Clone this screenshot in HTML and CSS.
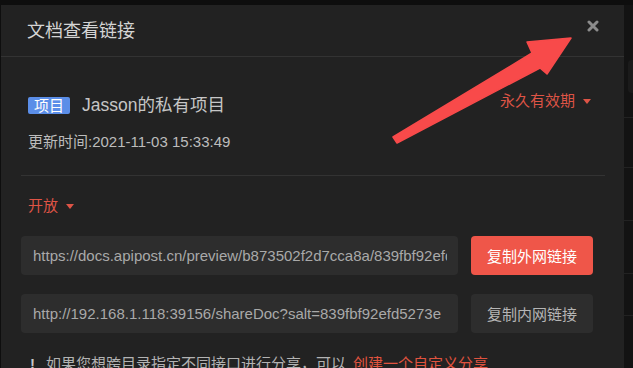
FILE: index.html
```html
<!DOCTYPE html>
<html lang="zh-CN">
<head>
<meta charset="utf-8">
<title>文档查看链接</title>
<link rel="stylesheet" href="styles.css">
</head>
<body>
<div class="screen">
  <div class="dialog">
    <div class="header">
      <div class="title">文档查看链接</div>
      <svg class="close" width="12" height="12" viewBox="0 0 12 12" aria-label="关闭">
        <path d="M2 2 L10 10 M10 2 L2 10" stroke="#8c8c8c" stroke-width="3" stroke-linecap="round"/>
      </svg>
    </div>
    <div class="body">
      <div class="info">
        <div class="info-row">
          <div class="project">
            <span class="tag">项目</span>
            <span class="project-name">Jasson的私有项目</span>
          </div>
          <div class="expire">永久有效期<span class="caret"></span></div>
        </div>
        <div class="updated">更新时间:2021-11-03 15:33:49</div>
      </div>
      <div class="access">开放<span class="caret"></span></div>
      <div class="link-row">
        <div class="field"><span class="field-text">https://docs.apipost.cn/preview/b873502f2d7cca8a/839fbf92efd5273e</span></div>
        <div class="btn btn-primary">复制外网链接</div>
      </div>
      <div class="link-row">
        <div class="field"><span class="field-text">http://192.168.1.118:39156/shareDoc?salt=839fbf92efd5273e</span></div>
        <div class="btn btn-secondary">复制内网链接</div>
      </div>
      <div class="hint"><span class="bang">!</span><span class="hint-text">如果您想跨目录指定不同接口进行分享，可以</span><span class="hint-link">创建一个自定义分享</span></div>
    </div>
  </div>
  <div class="side">
    <div class="side-box"></div>
    <div class="side-line l1"></div>
    <div class="side-line l2"></div>
    <div class="side-line l3"></div>
    <div class="side-line l4"></div>
    <div class="side-line l5"></div>
  </div>
  <svg class="arrow" width="633" height="368" viewBox="0 0 633 368">
    <polygon points="393,137 397,143 540,68 547,74 571,38 527,42 532,53" fill="#f84a4a" stroke="#f84a4a" stroke-width="1.5" stroke-linejoin="round"/>
  </svg>
</div>
</body>
</html>
```
FILE: styles.css
```css
html, body {
  margin: 0;
  padding: 0;
  background: #121212;
}
body {
  font-family: "Liberation Sans", "Noto Sans CJK SC", Arial, sans-serif;
  font-size: 15px;
}
.screen {
  position: relative;
  width: 633px;
  height: 368px;
  overflow: hidden;
  display: flex;
  padding-top: 5px;
  box-sizing: border-box;
  background: #0e0e0e;
}
.dialog {
  margin-left: 1px;
  width: 623px;
  height: 363px;
  background: #222222;
  overflow: hidden;
  flex: none;
}
.header {
  height: 51px;
  border-bottom: 1px solid #333333;
  display: flex;
  align-items: center;
  justify-content: space-between;
  padding: 0 25px 0 26px;
}
.title {
  font-size: 18px;
  color: #d4d4d4;
  line-height: 24px;
}
.close {
  align-self: flex-start;
  margin-top: 15px;
}
.body {
  padding: 0 19px 0 20px;
}
.info {
  padding: 38px 14px 23px 7px;
  border-bottom: 1px solid #333333;
}
.info-row {
  display: flex;
  justify-content: space-between;
  align-items: flex-start;
  height: 21px;
}
.project {
  display: flex;
  align-items: center;
  height: 21px;
}
.tag {
  display: inline-block;
  background: #5b8ee8;
  color: #ffffff;
  font-size: 15px;
  line-height: 17px;
  padding: 0 6px;
  border-radius: 2px;
  margin-right: 12px;
}
.project-name {
  font-size: 17.5px;
  color: #c6c6c6;
  line-height: 21px;
}
.expire {
  color: #de5446;
  line-height: 16px;
  margin-top: -2px;
  display: flex;
  align-items: center;
}
.caret {
  display: inline-block;
  width: 0;
  height: 0;
  border-left: 4px solid transparent;
  border-right: 4px solid transparent;
  border-top: 5px solid #de5446;
  margin-left: 8px;
}
.updated {
  margin-top: 16px;
  line-height: 20px;
  color: #bcbcbc;
}
.access {
  margin: 20px 0 0 7px;
  line-height: 20px;
  color: #de5446;
  display: flex;
  align-items: center;
}
.link-row {
  display: flex;
  gap: 13px;
  margin-top: 19px;
}
.access + .link-row {
  margin-top: 20px;
}
.field {
  width: 437px;
  height: 39px;
  box-sizing: border-box;
  background: #2d2d2d;
  border-radius: 4px;
  padding: 0 11px 0 12px;
  display: flex;
  align-items: center;
}
.field-text {
  display: block;
  overflow: hidden;
  white-space: nowrap;
  color: #a9a9a9;
  line-height: 20px;
}
.btn {
  width: 122px;
  height: 39px;
  border-radius: 4px;
  display: flex;
  align-items: center;
  justify-content: center;
}
.btn-primary {
  background: #ef5649;
  color: #ffffff;
}
.btn-secondary {
  background: #2d2d2d;
  color: #b5b5b5;
}
.hint {
  margin: 21px 0 0 9px;
  line-height: 20px;
  color: #b3b3b3;
  white-space: nowrap;
  display: flex;
}
.bang {
  font-weight: bold;
  color: #c8c8c8;
  width: 16px;
}
.hint-link {
  color: #e0533f;
  margin-left: 7px;
}
.side {
  flex: 1;
  position: relative;
  background: #131313;
}
.side-box {
  position: absolute;
  left: 4px;
  top: 55px;
  width: 20px;
  height: 33px;
  border-radius: 4px;
  background: #1b1b1b;
}
.side-line {
  position: absolute;
  left: 0;
  right: 0;
  height: 1px;
  background: #222222;
}
.l1 { top: 112px; }
.l2 { top: 162px; }
.l3 { top: 215px; }
.l4 { top: 268px; }
.l5 { top: 310px; }
.arrow {
  position: absolute;
  left: 0;
  top: 0;
  pointer-events: none;
}
```
